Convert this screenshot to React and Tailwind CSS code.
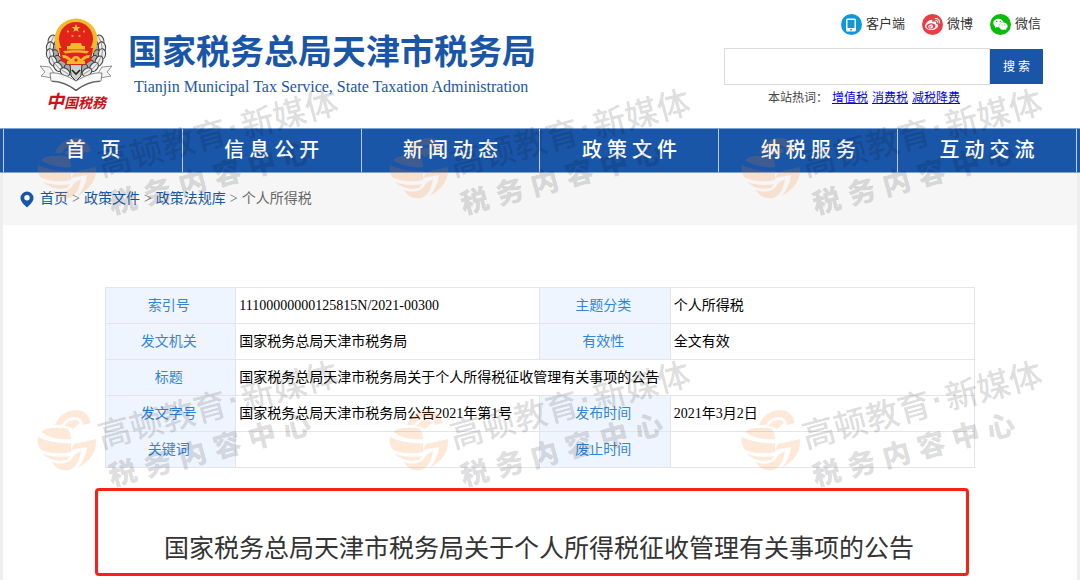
import React from "react";
import { FaWeibo, FaWeixin } from "react-icons/fa";

const navItems = [
  "首\u00a0\u00a0\u00a0页",
  "信 息 公 开",
  "新 闻 动 态",
  "政 策 文 件",
  "纳 税 服 务",
  "互 动 交 流",
];

const hotWords = ["增值税", "消费税", "减税降费"];

const crumbs = ["首页", "政策文件", "政策法规库"];

const infoRows = [
  [
    ["索引号", "11100000000125815N/2021-00300"],
    ["主题分类", "个人所得税"],
  ],
  [
    ["发文机关", "国家税务总局天津市税务局"],
    ["有效性", "全文有效"],
  ],
  [["标题", "国家税务总局天津市税务局关于个人所得税征收管理有关事项的公告"]],
  [
    ["发文字号", "国家税务总局天津市税务局公告2021年第1号"],
    ["发布时间", "2021年3月2日"],
  ],
  [
    ["关键词", ""],
    ["废止时间", ""],
  ],
];

function Emblem() {
  // wheat leaves, mirrored on both sides of the badge
  const leaves = [
    [12, 22, 25],
    [10, 29, 10],
    [10, 36, -8],
    [13, 43, -25],
    [18, 49, -42],
    [25, 54, -58],
  ];
  const half = leaves.map(([x, y, r]) => (
    <g key={y} transform={`translate(${x} ${y}) rotate(${r})`}>
      <ellipse cx="5" cy="1" rx="3.4" ry="4.6" fill="#a9a9a9" stroke="#333" strokeWidth="1" />
      <ellipse rx="3.6" ry="5.2" fill="#ececec" stroke="#444" strokeWidth="1.1" />
      <path d="M0 -4V4" stroke="#8a8a8a" strokeWidth="0.8" />
    </g>
  ));
  return (
    <svg viewBox="0 0 72 74" className="h-[74px] w-[72px]" aria-hidden="true">
      {half}
      <g transform="translate(72 0) scale(-1 1)">{half}</g>
      <path d="M30 46h12l-1 12-5 5-5-5z" fill="#cfcfcf" stroke="#333" strokeWidth="1" />
      <path d="M32 52l4 4 4-4" fill="none" stroke="#222" strokeWidth="1.6" />
      <path
        d="M0 48l10 1 5 8-3 3-11-2 4-4zM72 48l-10 1-5 8 3 3 11-2-4-4z"
        fill="#f4f4f4"
        stroke="#777"
        strokeWidth="0.8"
      />
      <path
        d="M10 55c9-1 17 3 26 8 9-5 17-9 26-8l-1 8c-9 0-17 3-25 9-8-6-16-9-25-9z"
        fill="#fafafa"
        stroke="#777"
        strokeWidth="0.9"
      />
      <path d="M12 63.500c9 0 16 3 24 9 8-6 15-9 24-9" fill="none" stroke="#555" strokeWidth="1.2" />
      <circle cx="36" cy="22" r="21.500" fill="#f4b92c" />
      <path d="M19 30l2 13 8 4h14l8-4 2-13z" fill="#e2231a" />
      <circle cx="36" cy="21" r="17" fill="#e2231a" />
      <path d="M36 6l1.100 3h3.200l-2.600 2 1 3.100-2.700-1.900-2.700 1.900 1-3.100-2.600-2h3.200z" fill="#f8c63a" />
      <g fill="#f4b92c">
        <circle cx="28" cy="13.500" r="1.100" />
        <circle cx="44" cy="13.500" r="1.100" />
        <circle cx="32.500" cy="18" r="1.100" />
        <circle cx="39.500" cy="18" r="1.100" />
        <path d="M31 25h10l1 3h-12zM27 28h18v3.500H27zM23 33c8-1 18-1 26 0l-2 2.500c-7-1.500-15-1.500-22 0z" />
        <path d="M22 37c5 0 7 2 9 4l5-3 5 3c2-2 4-4 9-4l-1 3c-3 0-5 2-7 4H30c-2-2-4-4-7-4z" />
        <circle cx="36" cy="42" r="4" />
        <path d="M27 43h18v3H27z" />
      </g>
      <circle cx="36" cy="42" r="1.600" fill="#e2231a" />
    </svg>
  );
}

function Social({ color, label, children }) {
  return (
    <a href="#" className="flex items-center gap-1 text-[13px] text-[#333]">
      <span className={`flex size-[21px] items-center justify-center rounded-full text-white ${color}`}>
        {children}
      </span>
      {label}
    </a>
  );
}

function Watermark() {
  return (
    <div className="relative h-[272px] w-[352px] shrink-0">
      <svg
        viewBox="0 0 60 62"
        className="absolute top-[137px] left-[37px] h-[62px] w-[60px]"
        fill="#f97f1e"
        fillOpacity="0.17"
      >
        <path d="M18 16C22 6 31 1 39 1c9 0 13 6 15 13l-8 2c-1-5-3-8-8-8-6 0-10 3-13 8z" />
        <path d="M27 17c3-4 7-6 11-6 3 0 4 1 5 3l-7 6c-2-2-5-3-9-3z" />
        <path d="M4 23c3-3 7-4 11-4 6 0 10-1 16 1 2 3 3 6 3 10-11 1-21-1-30-7z" />
        <path d="M1 28c11 5 22 7 33 6v9c-11 2-21 2-31-3C1 36 0 32 1 28z" />
        <path d="M6 45c9 3 18 4 27 2l-3 4c-8 2-18 0-24-6z" />
        <path d="M15 53c5 2 9 2 13 1 5-1 7-4 9-8l7-4c-1 8-4 16-12 19-8 1-14-2-17-8z" />
        <path d="M37 35l22-5c1 13-6 22-18 29 4-6 8-12 9-21l-16 3z" />
      </svg>
      <div className="absolute top-[115px] left-[94px] flex -rotate-[15deg] items-center font-['Noto_Sans_CJK_SC',sans-serif] text-[33px] leading-none font-medium whitespace-nowrap text-black/15">
        <span>高顿教育</span>
        <span className="w-4 text-center font-['Liberation_Sans',sans-serif] font-bold">·</span>
        <span>新媒体</span>
      </div>
      <div className="absolute top-[165px] left-[106px] flex -rotate-[15deg] gap-2 text-[28px] leading-none font-black text-black/15">
        {[..."税务内容中心"].map((ch) => (
          <span key={ch}>{ch}</span>
        ))}
      </div>
    </div>
  );
}

export default function App() {
  return (
    <div className="relative overflow-hidden bg-white font-['Liberation_Serif','Noto_Sans_CJK_SC',serif] text-sm text-black">
      <header className="flex h-32 justify-between pr-[37px] pl-10">
        <div className="flex gap-4 pt-[18px]">
          <div className="flex w-[72px] flex-col items-center">
            <Emblem />
            <span className="text-sm leading-5 font-bold whitespace-nowrap text-[#c8141b] italic">
              <span className="text-lg leading-5">中</span>国税務
            </span>
          </div>
          <div className="flex flex-col pt-[13px] text-[#1a56a8]">
            <h1 className="text-[34px] leading-[44px] font-bold whitespace-nowrap">国家税务总局天津市税务局</h1>
            <p className="pl-1.5 text-base leading-6 whitespace-nowrap">
              Tianjin Municipal Tax Service, State Taxation Administration
            </p>
          </div>
        </div>
        <div className="flex w-[319px] flex-col pt-3.5">
          <div className="flex justify-end gap-[17px] pr-0.5">
            <Social color="bg-[#1296db]" label="客户端">
              <svg viewBox="0 0 12 14" className="h-3.5 w-3">
                <rect x="1" y="0.500" width="10" height="13" rx="1.500" fill="#fff" />
                <rect x="2.500" y="2" width="7" height="8" fill="#1296db" />
                <circle cx="6" cy="11.700" r="0.900" fill="#1296db" />
              </svg>
            </Social>
            <Social color="bg-[#e93e44]" label="微博">
              <FaWeibo size={15} />
            </Social>
            <Social color="bg-[#09bb07]" label="微信">
              <FaWeixin size={15} />
            </Social>
          </div>
          <form className="mt-[13px] flex items-center" onSubmit={(e) => e.preventDefault()}>
            <input
              type="text"
              aria-label="搜索"
              className="h-[37px] min-w-0 flex-1 border border-[#dcdcdc] px-2 outline-none"
            />
            <button type="submit" className="h-[35px] w-[53px] bg-[#1a56a8] text-xs text-white">
              搜 索
            </button>
          </form>
          <div className="flex gap-1 pt-1 pl-11 text-xs leading-[18px] text-[#444]">
            <span>本站热词：</span>
            {hotWords.map((word) => (
              <a key={word} href="#" className="text-[#0000ee] underline">
                {word}
              </a>
            ))}
          </div>
        </div>
      </header>

      <nav className="border-y border-[#7fa3d3] bg-[#1a56a8] px-[3px]">
        <ul className="grid grid-cols-6 border-l border-white/70">
          {navItems.map((item) => (
            <li key={item} className="border-r border-white/70">
              <a href="#" className="block text-center text-xl leading-[43px] font-medium text-white">
                {item}
              </a>
            </li>
          ))}
        </ul>
      </nav>

      <main className="border-x-[3px] border-[#eee] pb-1">
        <div className="flex items-center bg-[#f6f6f6] pl-[17px] leading-[52px] text-[#666]">
          <svg viewBox="0 0 14 17" className="mr-1.5 h-[17px] w-3.5" aria-hidden="true">
            <path
              d="M7 0.500a6.500 6.500 0 0 1 6.500 6.500c0 4-4 7-6.500 9.500C4.500 14 0.500 11 0.500 7A6.500 6.500 0 0 1 7 0.500z"
              fill="#1a56a8"
            />
            <circle cx="7" cy="6.800" r="2.700" fill="#fff" />
          </svg>
          {crumbs.map((crumb) => (
            <React.Fragment key={crumb}>
              <a href="#" className="text-[#1a56a8]">
                {crumb}
              </a>
              <span className="px-1">&gt;</span>
            </React.Fragment>
          ))}
          <span>个人所得税</span>
        </div>

        <div className="mx-auto w-[81%] pt-[62px]">
          <table className="w-full table-fixed border-collapse">
            <colgroup>
              <col className="w-[15%]" />
              <col className="w-[35%]" />
              <col className="w-[15%]" />
              <col className="w-[35%]" />
            </colgroup>
            <tbody>
              {infoRows.map((row) => (
                <tr key={row[0][0]} className="h-9">
                  {row.map(([label, value]) => (
                    <React.Fragment key={label}>
                      <th
                        scope="row"
                        className="border border-[#e3e5e8] bg-[#eff5ff] pr-1 text-center font-normal text-[#3385d8]"
                      >
                        {label}
                      </th>
                      <td colSpan={row.length === 1 ? 3 : 1} className="border border-[#e3e5e8] px-[3px]">
                        {value}
                      </td>
                    </React.Fragment>
                  ))}
                </tr>
              ))}
            </tbody>
          </table>

          <div className="mt-5 mr-1.5 -ml-2.5 rounded-sm border-[3px] border-[#f92015] pt-[41px] pb-[7px] pl-3.5">
            <h2 className="text-center text-[25px] leading-[34px] whitespace-nowrap text-[#333]">
              国家税务总局天津市税务局关于个人所得税征收管理有关事项的公告
            </h2>
          </div>
        </div>
      </main>

      <div
        className="pointer-events-none absolute top-0 left-0 grid w-[1056px] grid-cols-3"
        aria-hidden="true"
      >
        {[0, 1, 2, 3, 4, 5].map((i) => (
          <Watermark key={i} />
        ))}
      </div>
    </div>
  );
}
